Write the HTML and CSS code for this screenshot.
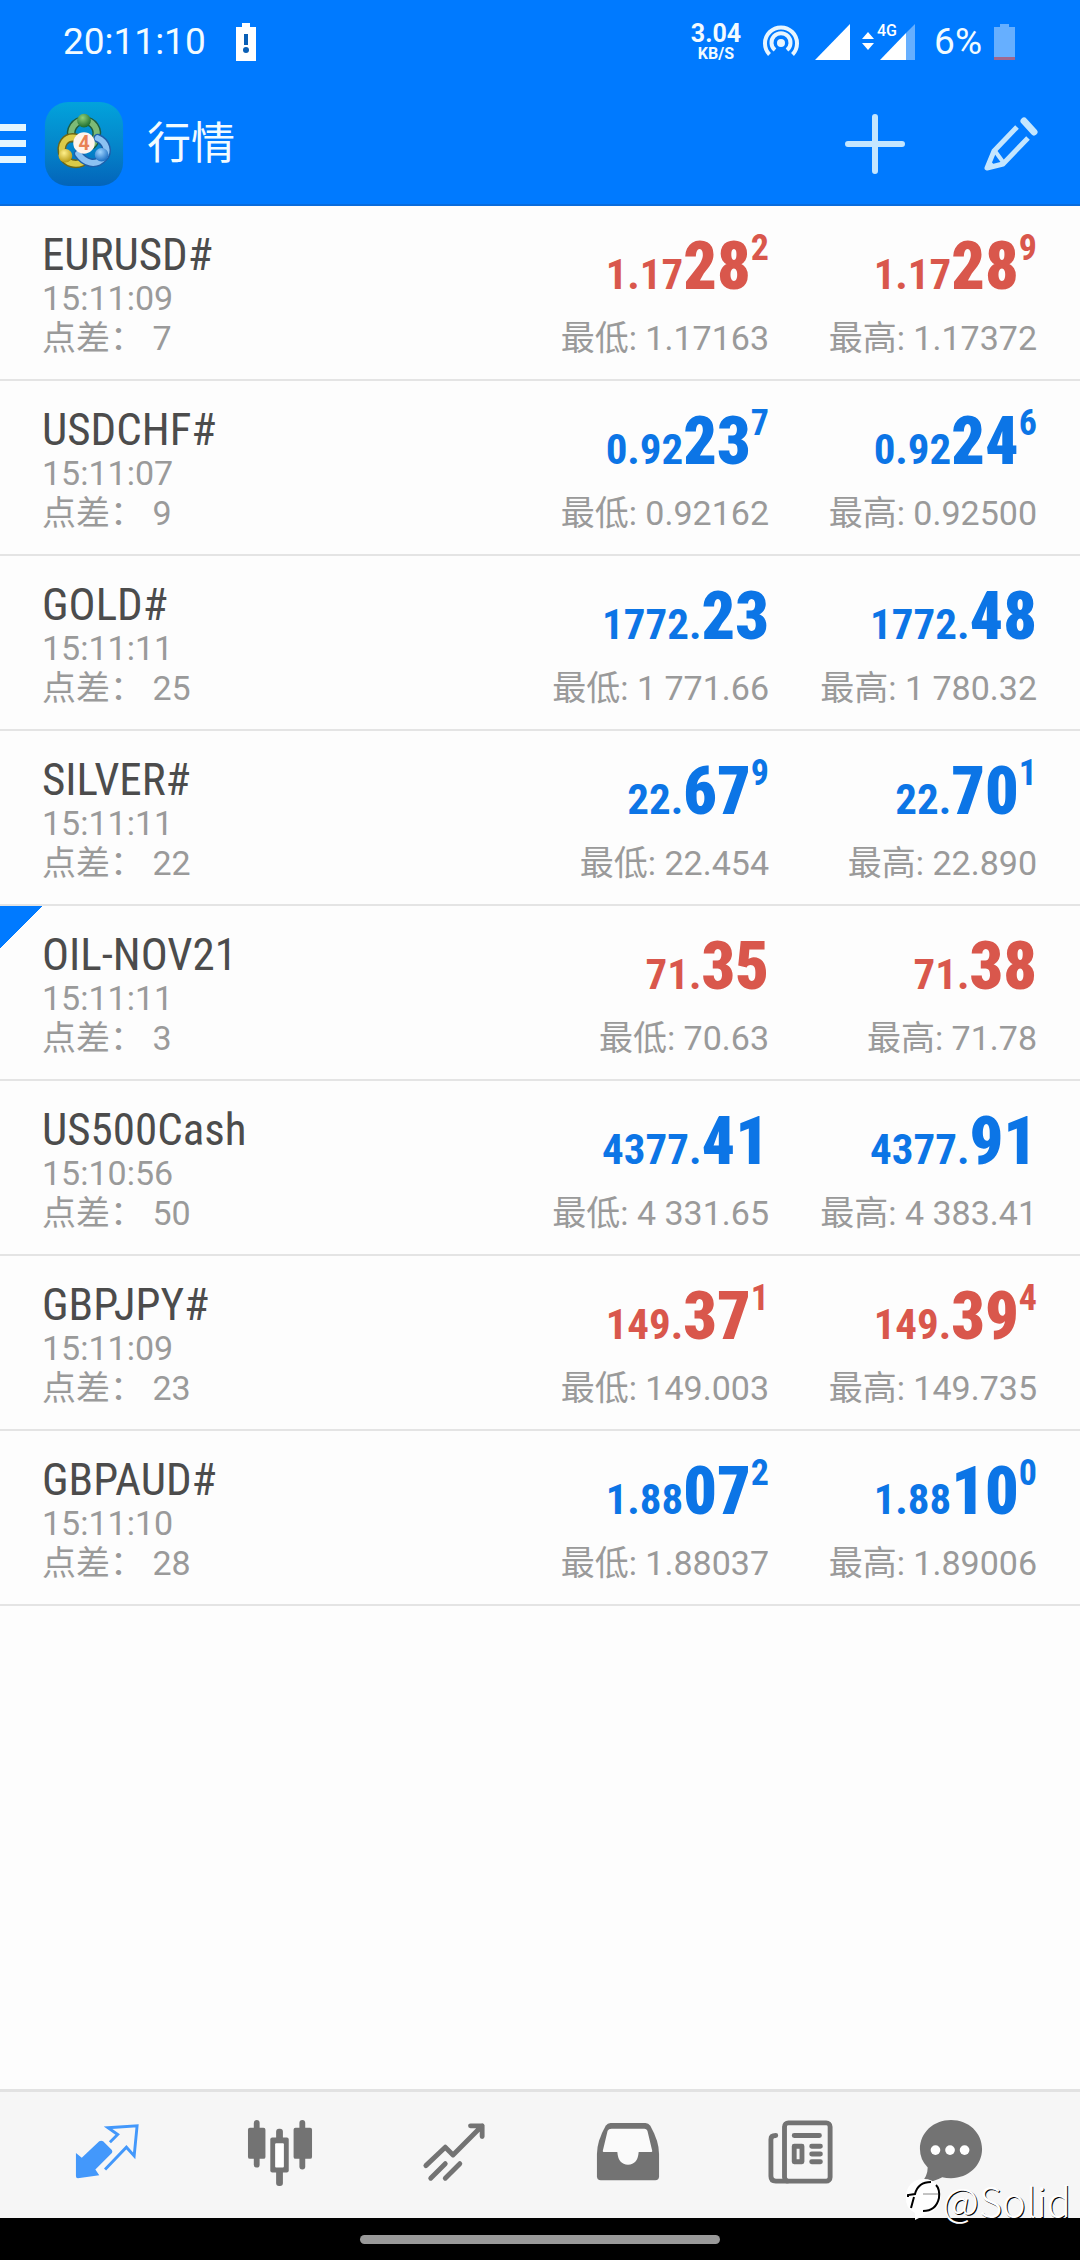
FILE: index.html
```
<!DOCTYPE html>
<html lang="zh-CN">
<head>
<meta charset="utf-8">
<meta name="viewport" content="width=device-width, initial-scale=1">
<title>行情</title>
<link rel="stylesheet" href="styles.css">
</head>
<body>
<div class="app">
  <header class="header">
    <div class="status">
      <span class="status-text">20:11:10</span>
      <svg class="status-alert" width="20" height="38" viewBox="0 0 20 38"><path fill="#fff" d="M6 0h8v4h6v34H0V4h6z"/><rect x="8" y="11" width="4" height="11" fill="#0a5fb5"/><circle cx="10" cy="27" r="3" fill="#0a5fb5"/></svg>
      <div class="speed"><span class="speed-value">3.04</span><span class="speed-unit">KB/S</span></div>
      <svg class="status-hotspot" width="36" height="34" viewBox="0 0 36 34" fill="none" stroke="#e8f6ff" stroke-width="4"><circle cx="18" cy="18" r="4" fill="#e8f6ff" stroke="none"/><path d="M12 25a9.500 9.500 0 1 1 12 0"/><path d="M6.500 29.500a16 16 0 1 1 23 0"/></svg>
      <svg class="status-signal" width="36" height="38" viewBox="0 0 36 38"><path fill="#fff" d="M35 1v36H0z"/></svg>
      <svg class="status-mobile" width="54" height="46" viewBox="0 -4 54 46"><path fill="#fff" d="M0 16l6-7 6 7zM0 20h12l-6 7z"/><path fill="#fff" d="M18 37l26-27v27z"/><path fill="#fff" fill-opacity=".4" d="M44 10l9-9v36h-9z"/><text x="15" y="13" class="network">4G</text></svg>
      <span class="status-text">6%</span>
      <svg class="status-battery" width="21" height="38" viewBox="0 0 21 38"><path fill="#fff" fill-opacity=".4" d="M6 1h9v3h6v30H0V4h6z"/><path fill="#a0688f" d="M0 34h21v3H0z"/></svg>
    </div>
    <div class="toolbar">
      <button class="menu" aria-label="菜单"><svg width="26" height="40" viewBox="0 0 26 40"><path fill="#e4f6ff" d="M0 0h26v7H0zM0 16h26v7H0zM0 32h26v7H0z"/></svg></button>
      <svg class="logo" width="82" height="86" viewBox="0 0 82 88">
        <defs>
          <linearGradient id="tile" x1="0" y1="0" x2="0" y2="1"><stop offset="0" stop-color="#02a3dc"/><stop offset=".5" stop-color="#0487cb"/><stop offset="1" stop-color="#0364ba"/></linearGradient>
          <radialGradient id="green" cx=".4" cy=".3" r=".7"><stop offset="0" stop-color="#8fd07a"/><stop offset="1" stop-color="#1d6d30"/></radialGradient>
          <radialGradient id="gold" cx=".4" cy=".3" r=".7"><stop offset="0" stop-color="#fff08a"/><stop offset="1" stop-color="#b79a16"/></radialGradient>
          <radialGradient id="sky" cx=".4" cy=".3" r=".7"><stop offset="0" stop-color="#9ed4ff"/><stop offset="1" stop-color="#1c6fc4"/></radialGradient>
        </defs>
        <rect x="1" y="1" width="80" height="86" rx="24" fill="url(#tile)"/>
        <g fill="none" stroke-linecap="round">
          <path d="M29 38a13 13 0 1 1 24 0q-1 5-4 7" stroke="#1d5d40" stroke-width="9"/>
          <path d="M29 38a13 13 0 1 1 24 0q-1 5-4 7" stroke="#7cba76" stroke-width="6"/>
          <path d="M34 38C22 35 15 45 20 57c4 7 12 9 19 6" stroke="#6c6718" stroke-width="9"/>
          <path d="M34 38C22 35 15 45 20 57c4 7 12 9 19 6" stroke="#dccb48" stroke-width="6"/>
          <path d="M55 38c9 4 12 14 6 20-8 9-19 6-26-4" stroke="#1e5faa" stroke-width="9"/>
          <path d="M55 38c9 4 12 14 6 20-8 9-19 6-26-4" stroke="#8cc2f2" stroke-width="6"/>
        </g>
        <circle cx="41" cy="20" r="7" fill="url(#green)"/>
        <circle cx="22" cy="56" r="7" fill="url(#gold)"/>
        <circle cx="59" cy="55" r="7" fill="url(#sky)"/>
        <circle cx="41" cy="43" r="11" fill="#fff4ec"/>
        <text x="41" y="50" class="logo-digit">4</text>
      </svg>
      <h1 class="title">行情</h1>
      <button class="add" aria-label="添加"><svg width="60" height="60" viewBox="0 0 60 60"><path d="M30 3v54M3 30h54" stroke="#c4e6ff" stroke-width="6" stroke-linecap="round"/></svg></button>
      <button class="edit" aria-label="编辑"><svg width="54" height="54" viewBox="0 0 54 54" fill="none" stroke="#c4e6ff" stroke-width="5" stroke-linejoin="round" stroke-linecap="round"><path d="M40 4l10 11" stroke-width="7"/><path d="M33 10L10 34 3 51l16-4 25-26" stroke-linecap="butt"/><path d="M11 34l8 11" stroke-width="4"/><path d="M3 51l3-8 5 6z" fill="#c4e6ff" stroke="none"/></svg></button>
    </div>
  </header>

  <main class="quotes">
    <table class="table">
      <tbody>
        <tr class="down">
          <th scope="row"><span class="symbol">EURUSD#</span><span class="time">15:11:09</span><span class="note">点差： 7</span></th>
          <td><span class="price">1.17<b>28</b><sup>2</sup></span><span class="note">最低: 1.17163</span></td>
          <td><span class="price">1.17<b>28</b><sup>9</sup></span><span class="note">最高: 1.17372</span></td>
        </tr>
        <tr class="up">
          <th scope="row"><span class="symbol">USDCHF#</span><span class="time">15:11:07</span><span class="note">点差： 9</span></th>
          <td><span class="price">0.92<b>23</b><sup>7</sup></span><span class="note">最低: 0.92162</span></td>
          <td><span class="price">0.92<b>24</b><sup>6</sup></span><span class="note">最高: 0.92500</span></td>
        </tr>
        <tr class="up">
          <th scope="row"><span class="symbol">GOLD#</span><span class="time">15:11:11</span><span class="note">点差： 25</span></th>
          <td><span class="price">1772.<b>23</b></span><span class="note">最低: 1 771.66</span></td>
          <td><span class="price">1772.<b>48</b></span><span class="note">最高: 1 780.32</span></td>
        </tr>
        <tr class="up">
          <th scope="row"><span class="symbol">SILVER#</span><span class="time">15:11:11</span><span class="note">点差： 22</span></th>
          <td><span class="price">22.<b>67</b><sup>9</sup></span><span class="note">最低: 22.454</span></td>
          <td><span class="price">22.<b>70</b><sup>1</sup></span><span class="note">最高: 22.890</span></td>
        </tr>
        <tr class="down marked">
          <th scope="row"><span class="symbol">OIL-NOV21</span><span class="time">15:11:11</span><span class="note">点差： 3</span></th>
          <td><span class="price">71.<b>35</b></span><span class="note">最低: 70.63</span></td>
          <td><span class="price">71.<b>38</b></span><span class="note">最高: 71.78</span></td>
        </tr>
        <tr class="up">
          <th scope="row"><span class="symbol">US500Cash</span><span class="time">15:10:56</span><span class="note">点差： 50</span></th>
          <td><span class="price">4377.<b>41</b></span><span class="note">最低: 4 331.65</span></td>
          <td><span class="price">4377.<b>91</b></span><span class="note">最高: 4 383.41</span></td>
        </tr>
        <tr class="down">
          <th scope="row"><span class="symbol">GBPJPY#</span><span class="time">15:11:09</span><span class="note">点差： 23</span></th>
          <td><span class="price">149.<b>37</b><sup>1</sup></span><span class="note">最低: 149.003</span></td>
          <td><span class="price">149.<b>39</b><sup>4</sup></span><span class="note">最高: 149.735</span></td>
        </tr>
        <tr class="up">
          <th scope="row"><span class="symbol">GBPAUD#</span><span class="time">15:11:10</span><span class="note">点差： 28</span></th>
          <td><span class="price">1.88<b>07</b><sup>2</sup></span><span class="note">最低: 1.88037</span></td>
          <td><span class="price">1.88<b>10</b><sup>0</sup></span><span class="note">最高: 1.89006</span></td>
        </tr>
      </tbody>
    </table>
  </main>

  <footer class="footer">
    <nav class="tabs">
      <a href="#quotes" class="tab active" aria-label="行情"><svg viewBox="0 0 68 68"><path fill="#4398fb" d="M2 34l6 5L26 22q2-1 4 0l9 9q1 2 0 3L22 51l4 6-22 3q-2 0-2-2z"/><path fill="none" stroke="#4398fb" stroke-width="3" d="M37 23l8-8-10-7 30-2-3 31-8-9-22 23"/></svg></a>
      <a href="#charts" class="tab" aria-label="图表"><svg viewBox="0 0 68 68"><g fill="#737373"><rect x="7" y="0" width="6" height="49" rx="3"/><rect x="1" y="8" width="18" height="32" rx="2"/><rect x="54" y="0" width="6" height="51" rx="3"/><rect x="48" y="8" width="19" height="32" rx="2"/><rect x="30" y="9" width="7" height="59" rx="3"/><rect x="24" y="18" width="19" height="36" rx="2"/></g><rect x="29" y="24" width="9" height="25" rx="1" fill="#fff"/></svg></a>
      <a href="#trade" class="tab" aria-label="交易"><svg viewBox="0 0 68 68" fill="none" stroke="#737373" stroke-width="5" stroke-linecap="round" stroke-linejoin="round"><path d="M5 47l20-19 8 8L63 6M51 6h12v11M10 60l15-15M25 60l15-15"/></svg></a>
      <a href="#history" class="tab" aria-label="历史"><svg viewBox="0 0 68 68"><path fill="#737373" d="M16 3h36q3 0 5 3 9 16 9 29v23q0 4-4 4H6q-4 0-4-4V35Q2 22 11 6q2-3 5-3z"/><path fill="#fafafa" d="M17 9h34q2 0 3 2l5 21q0 1-1 1H45q-1 13-11 13T23 33H9q-1 0-1-1l5-21q1-2 4-2z"/></svg></a>
      <a href="#news" class="tab" aria-label="新闻"><svg viewBox="0 0 68 68" fill="none" stroke="#737373" stroke-width="5" stroke-linecap="round" stroke-linejoin="round"><rect x="17" y="3" width="47" height="60" rx="4"/><path d="M8 16q-5 0-5 4v38q0 5 5 5h12"/><path d="M27 16h26M45 27h9M45 35h9M45 43h9"/><rect x="27" y="27" width="8" height="16"/></svg></a>
      <a href="#chat" class="tab" aria-label="消息"><svg viewBox="0 0 68 68"><path fill="#737373" d="M34 0c18 0 32 13 32 30S52 60 34 60q-5 0-9-1-9 5-22 6 7-7 7-16Q2 41 2 30C2 13 16 0 34 0z"/><g fill="#fff"><circle cx="18" cy="31" r="5"/><circle cx="33" cy="31" r="5"/><circle cx="48" cy="31" r="5"/></g></svg></a>
    </nav>
    <div class="gesture"><span class="pill"></span></div>
    <div class="watermark">
      <svg width="38" height="42" viewBox="0 0 38 42"><path fill="#fff" d="M19 0c11 0 17 8 17 17S30 33 22 35l-12 6v-7Q0 29 1 18C1 7 8 0 19 0z"/><path fill="none" stroke="#000" stroke-width="2" d="M3 18v-2l7-1Q13 3 26 3M31 6q4 4 3 13-3 13-16 13M9 18L6 29"/><path stroke="#888" d="M18 15h15"/></svg>
      <span>@Solid</span>
    </div>
  </footer>
</div>
</body>
</html>
```
FILE: styles.css
```
* { box-sizing: border-box; }

body {
  margin: 0;
  background: #fdfdfd;
  color: #9a9a9a;
  font-family: Roboto, "Noto Sans CJK SC", sans-serif;
}

button {
  padding: 0;
  border: 0;
  background: none;
}

svg { display: block; flex: none; }

.app {
  display: flex;
  flex-direction: column;
  min-height: 100vh;
}

/* Header */
.header {
  background: #007aff;
  border-bottom: 2px solid #0a6cdc;
  color: #f2fbff;
}

.status {
  display: flex;
  align-items: center;
  height: 84px;
  padding: 0 65px 0 63px;
}

.status-text {
  font-size: 37px;
  line-height: 40px;
}

.status-alert { margin-left: 30px; }

.speed {
  display: flex;
  flex-direction: column;
  align-items: center;
  margin-left: auto;
  font-weight: 700;
}

.speed-value { font-size: 25px; line-height: 24px; }
.speed-unit { font-size: 16px; line-height: 16px; }

.status-hotspot { margin-left: 22px; }
.status-signal { margin: 0 11px 0 16px; }
.status-mobile { margin-right: 18px; }
.status-battery { margin-left: 12px; }

.network {
  fill: #fff;
  font-size: 16px;
  font-weight: 500;
}

.toolbar {
  display: flex;
  align-items: center;
  height: 120px;
  padding-right: 42px;
}

.logo { margin-left: 17px; }

.logo-digit {
  fill: #e88254;
  font-size: 20px;
  font-weight: 700;
  text-anchor: middle;
}

.title {
  flex: 1;
  margin: 0 0 0 22px;
  font-size: 44px;
  line-height: 60px;
  font-weight: 400;
}

.add { margin-right: 79px; }

/* Quotes */
.quotes { flex: 1; }

.table {
  width: 100%;
  border-collapse: separate;
  border-spacing: 0;
  table-layout: fixed;
}

.table th,
.table td {
  padding: 24px 0 19px;
  border-bottom: 2px solid #e4e4e4;
  vertical-align: top;
  font-weight: 400;
  white-space: nowrap;
}

.table th {
  padding-left: 42px;
  text-align: left;
}

.table td {
  width: 268px;
  padding-right: 43px;
  text-align: right;
}

.table span { display: block; }

.symbol {
  color: #4c4c4c;
  font-family: "Roboto Condensed", Roboto, sans-serif;
  font-size: 45px;
  line-height: 50px;
}

.time {
  font-size: 34px;
  line-height: 36px;
}

.note {
  font-size: 34px;
  line-height: 44px;
}

.price {
  margin-bottom: 12px;
  font-family: "Roboto Condensed", Roboto, sans-serif;
  font-size: 43px;
  line-height: 40px;
  font-weight: 700;
}

.price b {
  font-size: 66px;
  line-height: 74px;
}

.price sup {
  font-size: 36px;
  line-height: 0;
  vertical-align: 29px;
}

.up .price { color: #0c75e6; }
.down .price { color: #d9574c; }

.marked th {
  background: linear-gradient(135deg, #007aff 30px, transparent 30px) no-repeat;
}

/* Bottom navigation */
.footer { position: relative; }

.tabs {
  display: grid;
  grid-template-columns: repeat(5, 174fr) 126fr;
  height: 129px;
  padding: 28px 66px 0 20px;
  border-top: 3px solid #e2e2e2;
  background: #f6f6f6;
}

.tab {
  display: flex;
  justify-content: center;
}

.tab svg {
  width: 66px;
  height: 66px;
}

.gesture {
  display: flex;
  justify-content: center;
  height: 42px;
  padding-top: 17px;
  background: #000;
}

.pill {
  width: 33.333%;
  height: 9px;
  border-radius: 5px;
  background: #999;
}

.watermark {
  position: absolute;
  right: 9px;
  bottom: 36px;
  display: flex;
  align-items: center;
  color: #fff;
  font-family: "Noto Sans CJK SC", sans-serif;
  font-size: 40px;
  line-height: 48px;
  font-weight: 300;
  text-shadow: 1px 1px 0 #000;
}
```
